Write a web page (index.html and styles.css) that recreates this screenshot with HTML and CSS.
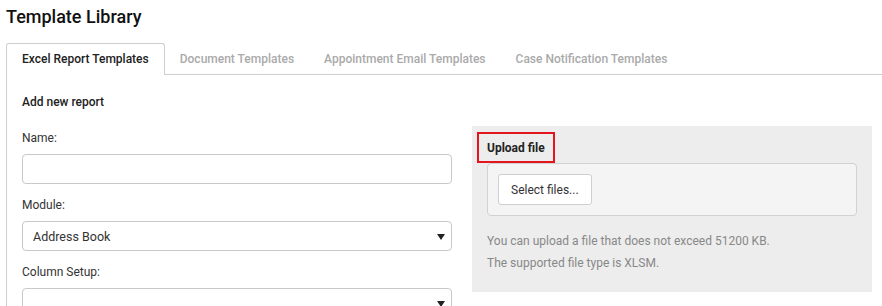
FILE: index.html
```html
<!DOCTYPE html>
<html lang="en">
<head>
  <meta charset="UTF-8">
  <title>Template Library</title>
  <link rel="stylesheet" href="styles.css">
</head>
<body>
  <h1>Template Library</h1>

  <div class="tabs">
    <div class="tab active">Excel Report Templates</div>
    <div class="tab">Document Templates</div>
    <div class="tab">Appointment Email Templates</div>
    <div class="tab">Case Notification Templates</div>
  </div>

  <div class="tab-content">
    <h2>Add new report</h2>

    <div class="report-grid">
      <div class="form-column">
        <div class="field">
          <label for="name">Name:</label>
          <input type="text" id="name" class="text-input">
        </div>
        <div class="field">
          <label for="module">Module:</label>
          <div class="select-wrap">
            <select id="module">
              <option>Address Book</option>
            </select>
          </div>
        </div>
        <div class="field">
          <label for="columns">Column Setup:</label>
          <div class="select-wrap">
            <select id="columns">
              <option></option>
            </select>
          </div>
        </div>
      </div>

      <div class="upload-panel">
        <div class="upload-title">Upload file</div>
        <div class="upload-box">
          <button class="select-btn">Select files...</button>
        </div>
        <p class="hint">You can upload a file that does not exceed 51200 KB.</p>
        <p class="hint">The supported file type is XLSM.</p>
      </div>
    </div>
  </div>
</body>
</html>
```

FILE: styles.css
```css
body {
  font-family: Roboto, 'Liberation Sans', Arial, sans-serif;
  margin: 0;
  padding: 0 0 0 6px;
  color: #333;
  font-size: 12px;
}

h1 {
  margin: 5px 0 0;
  font-size: 18px;
  line-height: 24px;
  font-weight: 500;
  color: #111;
}

.tabs {
  display: flex;
  margin-top: 14px;
  border-bottom: 1px solid #cfcfcf;
}

.tab {
  padding: 1px 15px 0;
  line-height: 30px;
  font-size: 12px;
  font-weight: 500;
  color: #aaa;
}

.tab.active {
  color: #222;
  background: #fff;
  border: 1px solid #cfcfcf;
  border-bottom: none;
  border-radius: 3px 3px 0 0;
  padding: 0 15px 1px;
  margin-bottom: -1px;
}

.tab-content {
  border-left: 1px solid #cfcfcf;
  padding: 19px 0 0 15px;
  min-height: 220px;
}

h2 {
  margin: 0;
  font-size: 12px;
  line-height: 16px;
  font-weight: 500;
  color: #222;
}

.report-grid {
  display: grid;
  grid-template-columns: 430px 400px;
  gap: 20px;
  margin-top: 16px;
  align-items: start;
}

.form-column {
  padding-top: 4px;
}

.field {
  margin-bottom: 13px;
}

.field label {
  display: block;
  line-height: 16px;
  margin-bottom: 8px;
  color: #333;
}

.text-input,
.select-wrap select {
  display: block;
  box-sizing: border-box;
  width: 100%;
  height: 30px;
  border: 1px solid #c9c9c9;
  border-radius: 4px;
  background: #fff;
  font-family: inherit;
  font-size: 12.5px;
  color: #333;
}

.select-wrap {
  position: relative;
}

.select-wrap select {
  appearance: none;
  padding: 0 10px;
}

.select-wrap::after {
  content: "";
  position: absolute;
  right: 7px;
  top: 13px;
  border-left: 4px solid transparent;
  border-right: 4px solid transparent;
  border-top: 6px solid #222;
}

.upload-panel {
  background: #ededed;
  padding: 6px 15px 18px;
}

.upload-title {
  display: inline-block;
  margin-left: -10px;
  padding: 1px 8px 0;
  line-height: 26px;
  border: 2px solid #e3161f;
  font-weight: 700;
  color: #222;
}

.upload-box {
  margin-top: 0;
  background: #f4f4f4;
  border: 1px solid #d2d2d2;
  border-radius: 4px;
  padding: 10px;
}

.select-btn {
  height: 31px;
  padding: 0 12px;
  background: #fff;
  border: 1px solid #cfcfcf;
  border-radius: 3px;
  font-family: inherit;
  font-size: 12px;
  color: #333;
}

.hint {
  margin: 0;
  line-height: 22px;
  color: #888;
}

.upload-box + .hint {
  margin-top: 14px;
}
```
